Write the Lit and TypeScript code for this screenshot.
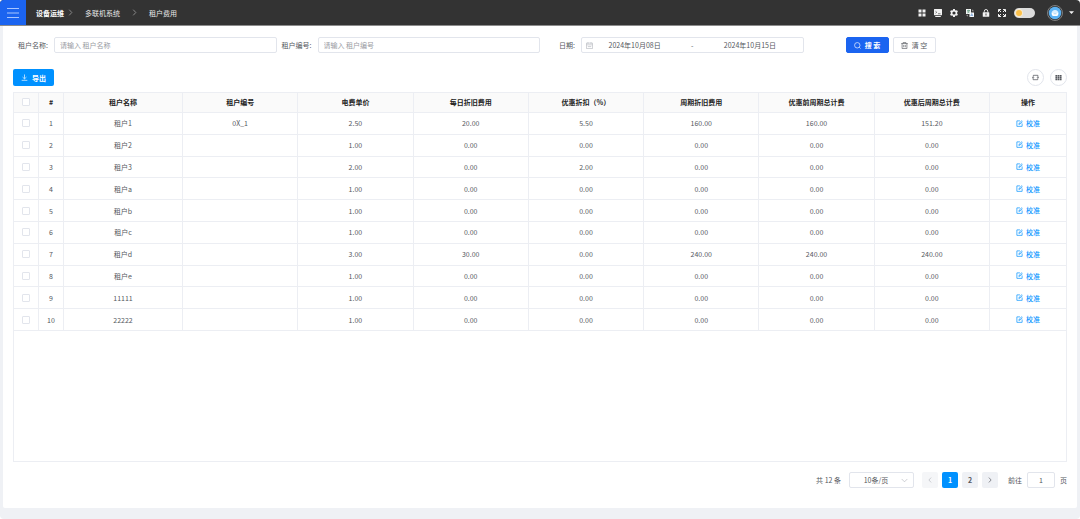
import { LitElement, html, svg, css, TemplateResult } from "lit";
import { customElement, state } from "lit/decorators.js";

interface Tenant {
  name: string;
  code: string;
  values: string[];
}

const COLUMNS = [
  "租户名称",
  "租户编号",
  "电费单价",
  "每日折旧费用",
  "优惠折扣（%）",
  "周期折旧费用",
  "优惠前周期总计费",
  "优惠后周期总计费",
];

const plain = (name: string, price = "1.00", discount = "0.00"): Tenant => ({
  name,
  code: "",
  values: [price, "0.00", discount, "0.00", "0.00", "0.00"],
});

const TENANTS: Tenant[] = [
  { name: "租户1", code: "0X_1", values: ["2.50", "20.00", "5.50", "160.00", "160.00", "151.20"] },
  plain("租户2"),
  plain("租户3", "2.00", "2.00"),
  plain("租户a"),
  plain("租户b"),
  plain("租户c"),
  { name: "租户d", code: "", values: ["3.00", "30.00", "0.00", "240.00", "240.00", "240.00"] },
  plain("租户e"),
  plain("11111"),
  plain("22222"),
];

const icon = (body: TemplateResult, size = 8) =>
  html`<svg class="icon" width=${size} height=${size} viewBox="0 0 16 16" aria-hidden="true">${body}</svg>`;

const chevronRight = svg`<path d="M5 1.500 11 8l-6 6.500" fill="none" stroke="currentColor" stroke-width="1.800"/>`;
const chevronLeft = svg`<path d="M11 1.500 5 8l6 6.500" fill="none" stroke="currentColor" stroke-width="1.800"/>`;
const chevronDown = svg`<path d="M1.500 4.500 8 11l6.500-6.500" fill="none" stroke="currentColor" stroke-width="1.500"/>`;

const icons = {
  apps: svg`<path fill="currentColor" d="M1 1h6v6H1zM9 1h6v6H9zM1 9h6v6H1zM9 9h6v6H9z"/>`,
  screen: svg`<path fill="currentColor" d="M1 0h14a1 1 0 0 1 1 1v10.500a1 1 0 0 1-1 1H1a1 1 0 0 1-1-1V1a1 1 0 0 1 1-1zM2.500 14h11v2h-11z"/><path d="M3 4.500 5.500 6.500 3 8.500M8 9.500h5" fill="none" stroke="#333" stroke-width="1.200"/>`,
  gear: svg`<path fill="currentColor" fill-rule="evenodd" d="M6.300 0h3.400l.6 2.300 1.500.8 2.300-.7 1.700 3L14.200 7.200v1.700l1.600 1.700-1.700 3-2.300-.7-1.500.8-.6 2.300H6.300l-.6-2.300-1.500-.8-2.300.7-1.700-3 1.600-1.700V7.200L.2 5.400l1.700-3 2.300.7 1.500-.8zM8 4.800a3.200 3.200 0 1 0 0 6.400 3.200 3.200 0 0 0 0-6.400z"/>`,
  translate: svg`<path fill="#f4f6f5" d="M0 0h10v10H0z"/><path d="M2 3h6M5 1.500V3m2 0c-.5 2.500-2 4-4.500 5M3 4c.8 2 2.200 3.200 4.500 4" stroke="#4c8a6c" stroke-width="1.200" fill="none"/><path fill="#fff" d="M7 7h9v9H7z"/><path d="M9 14.500 11.500 9l2.500 5.500M10 12.800h3" stroke="#4f86c6" stroke-width="1.200" fill="none"/><path d="M12 2.500h2V5M4 13.500H2V11.500" stroke="#ddd" stroke-width="1.200" fill="none"/>`,
  lock: svg`<path d="M4.500 7V4.500a3.500 3.500 0 0 1 7 0V7" fill="none" stroke="currentColor" stroke-width="1.800"/><rect x="1.500" y="6.500" width="13" height="9" rx="1" fill="currentColor"/><path d="M8 9v4" stroke="#333" stroke-width="1.800"/>`,
  full: svg`<path fill="none" stroke="currentColor" stroke-width="2" d="M1 6V1h5M10 1h5v5M15 10v5h-5M6 15H1v-5M1.500 1.500l4.500 4.500M14.500 1.500 10 6M14.500 14.500 10 10M1.500 14.500 6 10"/>`,
  caret: svg`<path fill="currentColor" d="M0 4h16L8 13z"/>`,
  calendar: svg`<path fill="none" stroke="currentColor" stroke-width="1.500" d="M1 2.500h14V15H1zM1 6.500h14M4.500.5v3.500M11.500.5v3.500M4 10.500h8"/>`,
  search: svg`<circle cx="7.500" cy="7.500" r="6.200" fill="none" stroke="currentColor" stroke-width="1.500"/><path d="m12 12 3 3" stroke="currentColor" stroke-width="1.500"/>`,
  trash: svg`<path fill="none" stroke="currentColor" stroke-width="1.500" d="M.5 3.500h15M5 3.500V1h6v2.500M2.500 3.500V15h11V3.500M6.200 6.500v5.500M9.800 6.500v5.500"/>`,
  download: svg`<path fill="none" stroke="currentColor" stroke-width="1.500" d="M8 1v10M3.500 7 8 11.200 12.500 7M1.500 14.500h13"/>`,
  refresh: svg`<path fill="none" stroke="currentColor" stroke-width="1.700" d="M3 6V3h10.500v5.500M13 10v3H2.500V7.500M.8 8.800 2.500 6.500l2 2M15.200 7.200 13.500 9.500l-2-2"/>`,
  grid: svg`<path fill="currentColor" d="M1 2h4v3.500H1zM6 2h4v3.500H6zM11 2h4v3.500h-4zM1 6.500h4V10H1zM6 6.500h4V10H6zM11 6.500h4V10h-4zM1 11h4v3.500H1zM6 11h4v3.500H6zM11 11h4v3.500h-4z"/>`,
  edit: svg`<path fill="none" stroke="currentColor" stroke-width="1.600" d="M9 2H2v12.500h12V8M6.500 10l1-3L14 1M6.500 10l3-.8L15 3.500"/>`,
};

@customElement("app-root")
export class AppRoot extends LitElement {
  @state() private page = 1;

  static styles = css`
    :host {
      display: flex;
      flex-direction: column;
      min-height: 100vh;
      background: #eff1f5;
      border-radius: 4px;
      overflow: hidden;
      color: #55585e;
      font: 7px/12px "Noto Sans CJK SC", sans-serif;
    }
    *,
    *::before {
      box-sizing: border-box;
    }
    button,
    input,
    select {
      margin: 0;
      padding: 0;
      font: inherit;
      color: inherit;
      background: none;
      border: 0;
      border-radius: 2px;
      outline-offset: 1px;
    }
    button {
      display: inline-flex;
      align-items: center;
      justify-content: center;
      cursor: pointer;
    }
    .icon {
      display: block;
      flex: none;
    }

    .topbar {
      display: flex;
      align-items: center;
      height: 26px;
      background: #333;
      border-bottom: 1px solid #8c8c8c;
      color: #fff;
    }
    .menu {
      width: 26px;
      height: 25px;
      border-radius: 0;
      background: #1b64f0;
      color: #a9c6ff;
    }
    .crumbs {
      display: flex;
      align-items: center;
      flex: 1;
      margin-left: 10px;
    }
    .crumbs a {
      color: #e8e8e8;
      text-decoration: none;
    }
    .crumbs .root {
      color: #fff;
      font-weight: 700;
    }
    .crumbs .icon {
      margin: 0 11px;
      color: #a0a0a0;
    }
    .crumbs .root + .icon {
      margin-left: 3px;
    }
    .tools {
      display: flex;
      align-items: center;
      gap: 8px;
      margin-right: 6px;
    }
    .tools button {
      color: #f2f2f2;
    }
    .theme {
      appearance: none;
      display: flex;
      align-items: center;
      width: 21px;
      height: 10px;
      padding: 0 2px;
      border-radius: 5px;
      background: #dcdcdc;
    }
    .theme::before {
      content: "";
      width: 6px;
      height: 6px;
      border-radius: 50%;
      background: #fbc04a;
      box-shadow: 0 0 0 1px #f5ead0;
    }
    .tools .user {
      gap: 6px;
      margin-left: 4px;
    }

    .card {
      display: flex;
      flex-direction: column;
      flex: 1;
      margin: 0 3px 11px;
      padding: 11px 10px 20px;
      background: #fff;
      border-radius: 0 0 2px 2px;
    }
    .filters {
      display: grid;
      grid-template-columns: repeat(4, 1fr);
    }
    .field {
      display: flex;
      align-items: center;
    }
    .field > label {
      flex: none;
      width: 41px;
      padding-right: 6px;
      text-align: right;
      white-space: nowrap;
    }
    .box {
      flex: 1;
      min-width: 0;
      height: 16px;
      border: 1px solid #e2e5ec;
      border-radius: 2px;
    }
    input.box {
      padding: 0 5px;
    }
    input::placeholder {
      color: #9a9ca3;
      opacity: 1;
    }
    .range {
      display: flex;
      align-items: center;
      padding: 0 11px 0 4px;
    }
    .range .icon {
      color: #b4b7be;
    }
    .range input {
      flex: 1;
      min-width: 0;
      text-align: center;
    }
    .range span {
      width: 32px;
      text-align: center;
    }
    .actions {
      display: flex;
      gap: 4px;
      padding-left: 42px;
    }
    .btn {
      gap: 4px;
      width: 43px;
      height: 16px;
      border: 1px solid #e2e5ec;
    }
    .btn.search {
      background: #1b64f0;
      border-color: #1b64f0;
      color: #fff;
      font-weight: 700;
    }
    .toolbar {
      display: flex;
      align-items: center;
      gap: 6px;
      margin: 16px 0 6px;
    }
    .export {
      gap: 4px;
      width: 41px;
      height: 17px;
      margin-right: auto;
      background: #0091ff;
      color: #fff;
      font-weight: 700;
    }
    .round {
      width: 17px;
      height: 17px;
      border: 1px solid #e2e5ec;
      border-radius: 50%;
    }

    .frame {
      flex: 1;
      border: 1px solid #eceef3;
    }
    table {
      width: 100%;
      height: 238px;
      table-layout: fixed;
      border-collapse: separate;
      border-spacing: 0;
      text-align: center;
    }
    th,
    td {
      padding: 0;
      border-left: 1px solid #eceef3;
      border-bottom: 1px solid #eceef3;
      vertical-align: middle;
    }
    th:first-child,
    td:first-child {
      border-left: 0;
    }
    th {
      height: 20px;
      padding-bottom: 1px;
      background: #fafafa;
      color: #222;
      font-weight: 700;
    }
    td {
      height: 21px;
    }
    .select {
      width: 24px;
    }
    .index {
      width: 25px;
    }
    .name {
      width: 119px;
    }
    .ops {
      width: 77px;
    }
    .check {
      appearance: none;
      display: block;
      width: 8px;
      height: 8px;
      margin: 0 auto;
      border: 1px solid #e2e5ec;
      border-radius: 1px;
      background: #fff;
    }
    .check:checked {
      background: #0091ff;
    }
    .calibrate {
      gap: 3px;
      color: #0091ff;
      font-weight: 500;
    }

    .pager {
      display: flex;
      align-items: center;
      justify-content: flex-end;
      gap: 4px;
      margin-top: 10px;
    }
    .size {
      display: grid;
      align-items: center;
      width: 65px;
      margin: 0 4px;
    }
    .size > * {
      grid-area: 1 / 1;
    }
    .size select {
      appearance: none;
      width: 100%;
      padding-right: 11px;
      text-align: center;
      text-align-last: center;
    }
    .size .icon {
      justify-self: end;
      margin-right: 6px;
      color: #b4b7be;
      pointer-events: none;
    }
    .num {
      width: 16px;
      height: 16px;
      background: #eff1f5;
      font-weight: 700;
    }
    .num:disabled {
      color: #b4b7be;
      background: #f5f6f8;
      cursor: default;
    }
    .num.on {
      background: #0091ff;
      color: #fff;
    }
    .jump {
      display: flex;
      align-items: center;
      gap: 5px;
      margin-left: 6px;
    }
    .jump .box {
      flex: none;
      width: 28px;
      text-align: center;
    }
  `;

  private field(id: string, label: string) {
    return html`<div class="field">
      <label for=${id}>${label}:</label>
      <input class="box" id=${id} type="text" placeholder="请输入 ${label}" />
    </div>`;
  }

  private row(t: Tenant, i: number) {
    return html`<tr>
      <td><input class="check" type="checkbox" aria-label=${t.name} /></td>
      <td>${i + 1}</td>
      <td>${t.name}</td>
      <td>${t.code}</td>
      ${t.values.map((v) => html`<td>${v}</td>`)}
      <td><button class="calibrate">${icon(icons.edit, 7)}校准</button></td>
    </tr>`;
  }

  private header() {
    const tools: [string, TemplateResult][] = [
      ["应用", icons.apps],
      ["终端", icons.screen],
      ["设置", icons.gear],
      ["语言", icons.translate],
      ["锁屏", icons.lock],
      ["全屏", icons.full],
    ];
    return html`<header class="topbar">
      <button class="menu" aria-label="菜单">
        <svg class="icon" width="12" height="10" viewBox="0 0 12 10" aria-hidden="true">
          <path d="M0 .5h12M0 5h12M0 9.500h12" stroke="currentColor" />
        </svg>
      </button>
      <nav class="crumbs">
        <a class="root" href="#">设备运维</a>${icon(chevronRight, 7)}
        <a href="#">多联机系统</a>${icon(chevronRight, 7)}
        <a href="#">租户费用</a>
      </nav>
      <div class="tools">
        ${tools.map(([label, body]) => html`<button aria-label=${label}>${icon(body, 8)}</button>`)}
        <input class="theme" type="checkbox" role="switch" aria-label="主题" />
        <button class="user" aria-label="用户">
          <svg class="icon" width="16" height="16" viewBox="0 0 32 32" aria-hidden="true">
            <circle cx="16" cy="16" r="15" fill="#333" stroke="#9a9a9a" stroke-width="1.500" />
            <circle cx="16" cy="16" r="12.500" fill="#5cb3f5" />
            <path d="M9 17c0-4 3-7 7-7s7 3 7 7-3 5-7 5-7-1-7-5z" fill="#d9efff" />
            <path d="M10 16h12v3c0 2-2 3-6 3s-6-1-6-3z" fill="#fff" />
            <path d="M13 17.500h6" stroke="#8cc6f2" stroke-width="1.500" />
          </svg>
          ${icon(icons.caret, 5)}
        </button>
      </div>
    </header>`;
  }

  private pager() {
    return html`<div class="pager">
      <span>共 12 条</span>
      <div class="size">
        <select class="box" aria-label="每页条数">
          <option>10条/页</option>
          <option>20条/页</option>
        </select>
        ${icon(chevronDown, 7)}
      </div>
      <button class="num" aria-label="上一页" ?disabled=${this.page === 1} @click=${() => (this.page = 1)}>
        ${icon(chevronLeft, 6)}
      </button>
      ${[1, 2].map(
        (n) => html`<button class="num ${n === this.page ? "on" : ""}" @click=${() => (this.page = n)}>${n}</button>`
      )}
      <button class="num" aria-label="下一页" ?disabled=${this.page === 2} @click=${() => (this.page = 2)}>
        ${icon(chevronRight, 6)}
      </button>
      <label class="jump">前往 <input class="box" type="text" .value=${String(this.page)} /> 页</label>
    </div>`;
  }

  render() {
    return html`
      ${this.header()}
      <main class="card">
        <form class="filters" @submit=${(e: Event) => e.preventDefault()}>
          ${this.field("name", "租户名称")} ${this.field("code", "租户编号")}
          <div class="field">
            <label for="from">日期:</label>
            <div class="box range">
              ${icon(icons.calendar, 7)}
              <input id="from" type="text" value="2024年10月08日" />
              <span>-</span>
              <input type="text" aria-label="结束日期" value="2024年10月15日" />
            </div>
          </div>
          <div class="actions">
            <button class="btn search">${icon(icons.search, 7)}搜 索</button>
            <button class="btn" type="reset">${icon(icons.trash, 7)}清 空</button>
          </div>
        </form>
        <div class="toolbar">
          <button class="export">${icon(icons.download, 7)}导出</button>
          <button class="round" aria-label="刷新">${icon(icons.refresh, 7)}</button>
          <button class="round" aria-label="列设置">${icon(icons.grid, 7)}</button>
        </div>
        <div class="frame">
          <table>
            <thead>
              <tr>
                <th class="select"><input class="check" type="checkbox" aria-label="全选" /></th>
                <th class="index">#</th>
                ${COLUMNS.map((c, i) => html`<th class=${i === 0 ? "name" : ""}>${c}</th>`)}
                <th class="ops">操作</th>
              </tr>
            </thead>
            <tbody>
              ${TENANTS.map((t, i) => this.row(t, i))}
            </tbody>
          </table>
        </div>
        ${this.pager()}
      </main>
    `;
  }
}
